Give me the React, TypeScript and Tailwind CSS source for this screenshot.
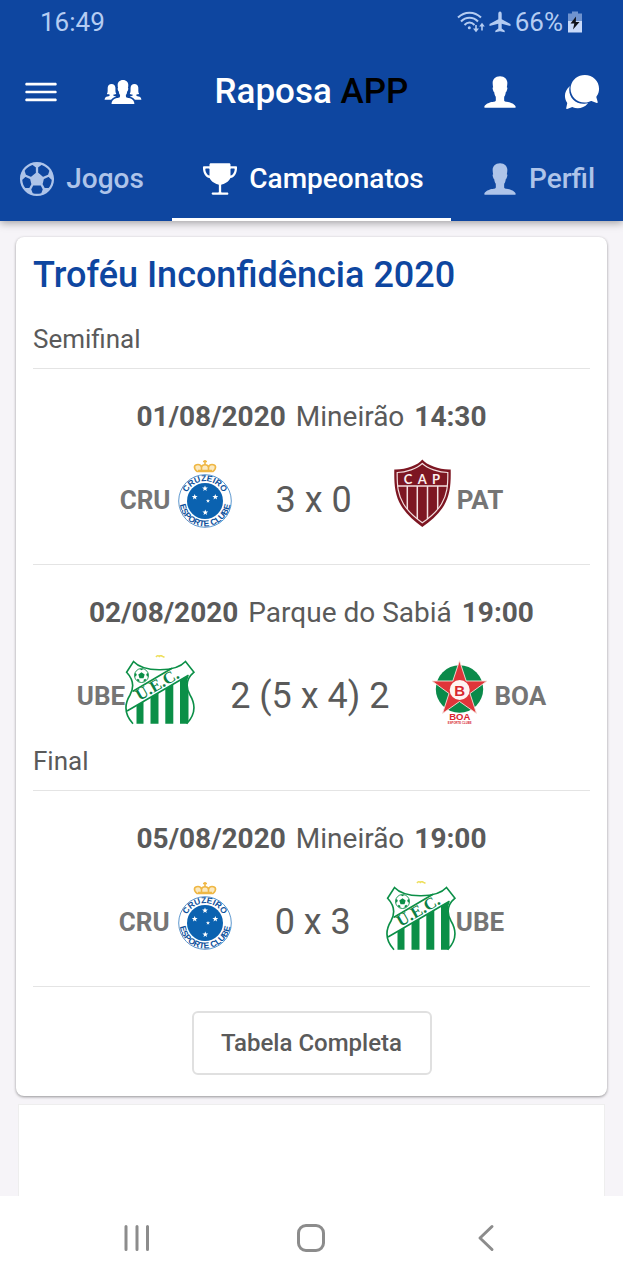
import type { ReactNode } from "react";
import {
  IoIosChatbubbles,
  IoIosFootball,
  IoIosMenu,
  IoIosPeople,
  IoIosPerson,
  IoIosTrophy,
} from "react-icons/io";

type Team = "CRU" | "PAT" | "UBE" | "BOA";

type Match = {
  date: string;
  place: string;
  time: string;
  home: Team;
  away: Team;
  score: string;
};

const phases: { name: string; matches: Match[] }[] = [
  {
    name: "Semifinal",
    matches: [
      { date: "01/08/2020", place: "Mineirão", time: "14:30", home: "CRU", away: "PAT", score: "3 x 0" },
      { date: "02/08/2020", place: "Parque do Sabiá", time: "19:00", home: "UBE", away: "BOA", score: "2 (5 x 4) 2" },
    ],
  },
  {
    name: "Final",
    matches: [
      { date: "05/08/2020", place: "Mineirão", time: "19:00", home: "CRU", away: "UBE", score: "0 x 3" },
    ],
  },
];

const STAR = "M0-3 .8-.9 2.9-.9 1.2.4 1.8 2.5 0 1.2-1.8 2.5-1.2.4-2.9-.9-.8-.9Z";

function CruzeiroCrest() {
  return (
    <svg viewBox="0 0 70 70" className="size-[70px]" role="img" aria-label="Cruzeiro">
      <defs>
        <path id="cru-top" d="M15.2 42a19.8 19.8 0 0 1 39.600 0" />
        <path id="cru-bottom" d="M11.500 32a25.500 25.500 0 1 0 47 0" />
      </defs>
      <path
        d="M27 12.5C23 9 24 5.5 28 5.5c2 0 3 1 3.5 2.500C32 5 38 5 38.500 8c.5-1.500 1.500-2.500 3.500-2.500 4 0 5 3.500 1 7Z"
        fill="#fbe9c0"
      />
      <g fill="none" stroke="#efb744" strokeWidth="1.6">
        <path d="M27 12.5C23 9 24 5.5 28 5.5c2 0 3 1 3.5 2.500C32 5 38 5 38.500 8c.5-1.500 1.500-2.500 3.500-2.500 4 0 5 3.500 1 7Z" />
        <path d="M35 1v5M33 2.500h4M31.500 8v4M38.500 8v4M28 11.500h14" />
      </g>
      <circle cx="35" cy="42" r="26.3" fill="#fff" stroke="#4b8bc8" strokeWidth="0.9" />
      <circle cx="35" cy="42" r="18" fill="#0b62b0" />
      <g fill="#0b4f9b" fontFamily="Liberation Sans, sans-serif" fontWeight="700" fontSize="8.5">
        <text textAnchor="middle">
          <textPath href="#cru-top" startOffset="50%">CRUZEIRO</textPath>
        </text>
        <text textAnchor="middle">
          <textPath href="#cru-bottom" startOffset="50%">ESPORTE CLUBE</textPath>
        </text>
      </g>
      <g fill="#fff">
        <path d={STAR} transform="translate(35 29.5)" />
        <path d={STAR} transform="translate(24.7 38)" />
        <path d={STAR} transform="translate(45.3 38)" />
        <path d={STAR} transform="translate(38 42) scale(.7)" />
        <path d={STAR} transform="translate(35.3 53.5)" />
      </g>
    </svg>
  );
}

function PatrocinenseCrest() {
  return (
    <svg viewBox="0 0 70 70" className="size-[70px]" role="img" aria-label="Patrocinense">
      <path
        d="M35.3.6C31 6.500 18 11 7.300 10.500C7 26 8 36 14 46.500c5 8.500 13 15.500 21.300 21.500C44 62 52 55 57 46.500 63 36 64 26 63.700 10.500 53 11 40 6.500 35.300.6Z"
        fill="#7d1622"
      />
      <path
        d="M35.3 4.500C30 9.500 19 13.500 10.200 13.500C10 27 11 36 16.500 45c4.500 7.500 11.500 13.500 18.800 18.800C43 58.500 50 52.500 54.500 45 60 36 61 27 60.800 13.500 52 13.500 40.500 9.500 35.300 4.500Z"
        fill="#7d1622"
        stroke="#f3dfe0"
        strokeWidth="1.200"
      />
      <path d="M10.500 27h50M20.300 27v23M30.300 27v33M40.500 27v33M50.700 27v23" stroke="#f3dfe0" strokeWidth="1.500" fill="none" />
      <g fill="#fbeeee" fontFamily="Lato, sans-serif" fontWeight="700" fontSize="13" textAnchor="middle">
        <text x="21" y="24.500">C</text>
        <text x="35.300" y="24.500">A</text>
        <text x="49" y="24.500">P</text>
      </g>
    </svg>
  );
}

function UberlandiaCrest() {
  return (
    <svg viewBox="0 0 70 70" className="size-[70px]" role="img" aria-label="Uberlândia">
      <defs>
        <clipPath id="ube-stripes">
          <path d="M2.300 56 64.500 20C60 27 62 35 66 42c5 10 4 18-4 26.700H8C5 65 2 61 2.300 56Z" />
        </clipPath>
      </defs>
      <path d="M31 2c1-1.500 2.500-1.500 3.200-.6.700-.8 2.300-.8 3.300 0 .8.400 1.500.6 2 1" fill="none" stroke="#eedf5c" strokeWidth="1.500" />
      <path d="M11.500 30h7v40h-7zM25.500 30h8v40h-8zM40.300 20h8v50h-8zM55 10h8.500v60H55z" fill="#0b8f47" clipPath="url(#ube-stripes)" />
      <g fill="none" stroke="#0b8f47" strokeWidth="1.600">
        <path d="M8 68.700C-1 59-.5 49 5 40 10 31 8 24 1.600 17.200L8.500 6.500C18 17 50 18 60.500 6.500L69 17.200C61 24 60 31 65 40c6 10 6 19-3.300 28.700" />
        <path d="M7.500 36.500 47 13.300M2 56 63.500 20.300" />
      </g>
      <circle cx="16.500" cy="20.500" r="7" fill="#fff" stroke="#0b8f47" strokeWidth="0.900" />
      <path
        d="m16.500 17.200 3.200 2.400-1.200 3.700h-4l-1.200-3.700ZM14.700 14l1.800 1.300 1.800-1.300ZM10 18l1.800 1-.6 2.200-1.700.3ZM23 18l-1.800 1 .6 2.200 1.700.3ZM12 25.500l.3-1.800 1.900.7.300 2.600ZM21 25.500l-.3-1.800-1.900.7-.3 2.600Z"
        fill="#0b8f47"
      />
      <text
        transform="translate(14.500 46) rotate(-30)"
        fill="#0b8043"
        fontFamily="Liberation Serif, serif"
        fontWeight="700"
        fontSize="16.500"
      >
        U.E.C.
      </text>
    </svg>
  );
}

function BoaCrest() {
  return (
    <svg viewBox="0 0 70 70" className="size-[70px]" role="img" aria-label="Boa">
      <circle cx="34.500" cy="34" r="23.700" fill="#0b8a4a" />
      <path
        d="M34.500 5.700 41.200 26H62L45 38.500 51.500 58.500 34.500 46.500 17.500 58.500 24 38.500 7 26H27.800Z"
        fill="#e0353a"
        stroke="#f6e3dc"
        strokeWidth="0.900"
      />
      <circle cx="34.700" cy="35" r="10" fill="#fff4f2" />
      <g fill="#d8272f" fontFamily="Liberation Sans, sans-serif" fontWeight="700" textAnchor="middle">
        <text x="34.700" y="40.500" fontSize="15">B</text>
        <text x="34.700" y="65.200" fontSize="9.500">BOA</text>
        <text x="34.700" y="68.600" fontSize="2.800">ESPORTE CLUBE</text>
      </g>
    </svg>
  );
}

const crests: Record<Team, () => ReactNode> = {
  CRU: CruzeiroCrest,
  PAT: PatrocinenseCrest,
  UBE: UberlandiaCrest,
  BOA: BoaCrest,
};

function StatusBar() {
  return (
    <div className="flex h-11 items-center justify-between px-10 text-[26px] text-[#b4ccf2]">
      <span>16:49</span>
      <div className="flex items-center gap-1">
        <svg viewBox="0 0 28 22" className="h-[22px] w-7" fill="none" stroke="currentColor" strokeWidth="2" aria-hidden="true">
          <path d="M1 6.500c6.500-6.500 16.500-6.500 23 0M4 10.500c4.800-5 12.200-5 17 0M7.500 14c3-3.200 7-3.200 10 0" />
          <circle cx="12.300" cy="16.800" r="1.500" fill="currentColor" stroke="none" />
          <path d="M19 14v6M25 19.500v-6.500" strokeWidth="1.600" />
          <path d="m16 17.500 3 3.700 3-3.700ZM22.200 15.500l2.800-3.700 2.800 3.700Z" fill="currentColor" stroke="none" />
        </svg>
        <svg viewBox="0 0 22 22" className="size-[22px]" fill="currentColor" aria-hidden="true">
          <path d="M11 .5c-1.200 0-1.700 1.300-1.700 2.500v5.200L.5 13v2l8.800-2.200v4.700l-3 2.200v1.600l4.700-1 4.700 1v-1.600l-3-2.200v-4.700l8.800 2.200v-2l-8.800-4.800V3C12.700 1.800 12.200.5 11 .5Z" />
        </svg>
        <span>66%</span>
        <svg viewBox="0 0 16 22" className="h-[22px] w-4" aria-hidden="true">
          <path d="M1 2.500h4V.5h6v2h4V10H1Z" fill="#6f93cf" />
          <path d="M1 10h14v11.500H1Z" fill="#c9dafa" />
          <path d="m9 5.500-5.500 7h3.800L6 18.500l6.500-7.500H8.800Z" fill="#10131c" />
        </svg>
      </div>
    </div>
  );
}

function Toolbar() {
  return (
    <div className="flex h-24 items-center justify-between px-5 text-white">
      <div className="flex items-center gap-10">
        <button type="button" aria-label="Menu">
          <IoIosMenu className="size-[42px]" />
        </button>
        <button type="button" aria-label="Torcida">
          <IoIosPeople className="size-[42px]" />
        </button>
      </div>
      <h1 className="text-[35px] font-medium">
        Raposa <span className="text-black">APP</span>
      </h1>
      <div className="flex items-center gap-10">
        <button type="button" aria-label="Conta">
          <IoIosPerson className="size-[42px]" />
        </button>
        <button type="button" aria-label="Mensagens">
          <IoIosChatbubbles className="size-[42px]" />
        </button>
      </div>
    </div>
  );
}

function Tabs() {
  return (
    <nav className="grid h-[81px] grid-cols-[1fr_279px_1fr] text-[28px] font-medium text-[#aec4e9]">
      <a href="#jogos" className="flex items-center justify-center gap-2 border-b-3 border-transparent pr-3">
        <IoIosFootball className="size-[42px]" />
        Jogos
      </a>
      <a
        href="#campeonatos"
        aria-current="page"
        className="flex items-center justify-center gap-2 border-b-3 border-white text-white"
      >
        <IoIosTrophy className="size-[42px]" />
        Campeonatos
      </a>
      <a href="#perfil" className="flex items-center justify-center gap-2 border-b-3 border-transparent">
        <IoIosPerson className="size-[42px]" />
        Perfil
      </a>
    </nav>
  );
}

function MatchRow({ match }: { match: Match }) {
  const HomeCrest = crests[match.home];
  const AwayCrest = crests[match.away];

  return (
    <li className="border-b border-[#e4e4e4] pt-8 pb-[35px] last:nth-2:border-b-0 last:nth-2:pb-[7px]">
      <p className="flex justify-center gap-2.5 text-[28px] leading-8">
        <b>{match.date}</b>
        <span>{match.place}</span>
        <b>{match.time}</b>
      </p>
      <div className="mt-[26px] flex h-[70px] justify-center">
        <b className="pt-2 text-[26px] leading-[66px] text-[#757575]">{match.home}</b>
        <HomeCrest />
        <span className="px-[35px] pt-2 text-4xl leading-[66px]">{match.score}</span>
        <AwayCrest />
        <b className="pt-2 text-[26px] leading-[66px] text-[#757575]">{match.away}</b>
      </div>
    </li>
  );
}

function SystemNav() {
  return (
    <div className="grid h-[84px] grid-cols-3 place-items-center bg-white px-[50px] text-[#8c8c8c]">
      <button type="button" aria-label="Recentes">
        <svg viewBox="0 0 28 28" className="size-7" fill="none" stroke="currentColor" strokeWidth="3" strokeLinecap="round">
          <path d="M3 2.500v23M14 2.500v23M24.500 2.500v23" />
        </svg>
      </button>
      <button type="button" aria-label="Início">
        <svg viewBox="0 0 28 28" className="size-7" fill="none" stroke="currentColor" strokeWidth="3">
          <rect x="1.500" y="1.500" width="25" height="25" rx="7.500" />
        </svg>
      </button>
      <button type="button" aria-label="Voltar">
        <svg viewBox="0 0 28 28" className="size-7" fill="none" stroke="currentColor" strokeWidth="3" strokeLinecap="round" strokeLinejoin="round">
          <path d="M20 2.500 8 14l12 11.500" />
        </svg>
      </button>
    </div>
  );
}

export default function App() {
  return (
    <div className="flex min-h-screen flex-col bg-[#f6f4f8] font-[Roboto,sans-serif] text-[#5a5a5a]">
      <header className="bg-[#0e46a0] shadow-[0_2px_8px_rgba(0,0,0,0.35)]">
        <StatusBar />
        <Toolbar />
        <Tabs />
      </header>

      <main className="flex flex-1 flex-col pt-4">
        <section className="mx-4 rounded-lg bg-white px-[17px] pb-[21px] shadow-[0_1px_3px_rgba(0,0,0,0.4)]">
          <h2 className="pt-[18px] text-4xl leading-10 font-medium text-[#0e46a0]">
            Troféu Inconfidência 2020
          </h2>
          <div className="pt-[15px]">
            {phases.map((phase) => (
              <div key={phase.name}>
                <h3 className="border-b border-[#e4e4e4] py-3 text-[26px] leading-[34px]">
                  {phase.name}
                </h3>
                <ul>
                  {phase.matches.map((match) => (
                    <MatchRow key={match.date} match={match} />
                  ))}
                </ul>
              </div>
            ))}
          </div>
          <div className="flex justify-center pt-6">
            <button
              type="button"
              className="h-16 w-60 rounded-md border-2 border-[#e0e0e0] text-2xl font-medium"
            >
              Tabela Completa
            </button>
          </div>
        </section>
        <section className="mx-[18px] mt-2 flex-1 border border-b-0 border-[#eeeeee] bg-white" />
      </main>

      <SystemNav />
    </div>
  );
}
